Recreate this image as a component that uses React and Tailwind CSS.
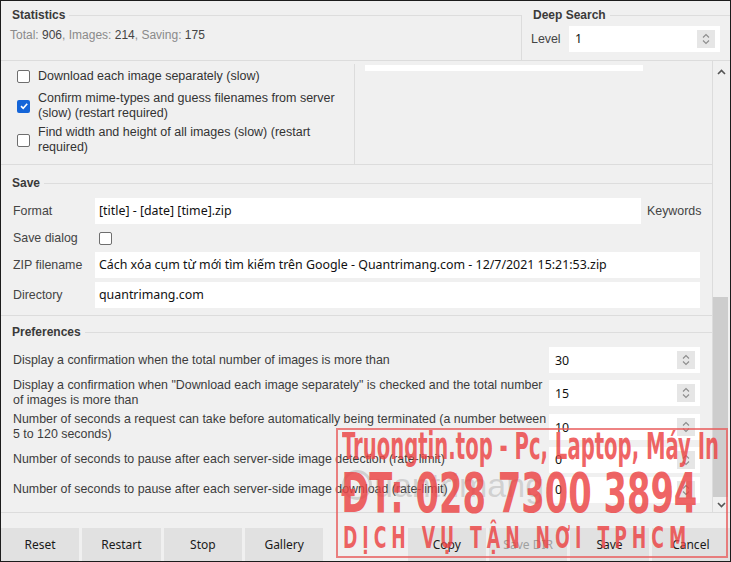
import React from "react";

function Spinner() {
  return (
    <div className="w-[18px] h-[18px] bg-[#e6e6e6] flex items-center justify-center shrink-0">
      <svg width="10" height="14" viewBox="0 0 10 14" fill="none" stroke="#8c8c8c" strokeWidth="1.1">
        <path d="M2 5.5 L5 2.5 L8 5.5" />
        <path d="M2 8.5 L5 11.5 L8 8.5" />
      </svg>
    </div>
  );
}

function NumInput({ value, w = "w-[151px]" }) {
  return (
    <div className={"bg-white h-[26px] flex items-center pl-[6px] pr-[5px] shrink-0 " + w}>
      <span className="flex-1 text-[12.4px] text-[#111] font-['Noto_Sans',sans-serif]">{value}</span>
      <Spinner />
    </div>
  );
}

function Check({ checked }) {
  if (checked) {
    return (
      <div className="w-[13px] h-[13px] rounded-[2px] bg-[#1565d8] flex items-center justify-center shrink-0">
        <svg width="10" height="10" viewBox="0 0 10 10" fill="none" stroke="white" strokeWidth="1.6">
          <path d="M2 5.2 L4.2 7.3 L8.2 2.8" />
        </svg>
      </div>
    );
  }
  return <div className="w-[13px] h-[13px] rounded-[2px] bg-white border border-[#6e6e6e] shrink-0" />;
}

function Legend({ children, className = "" }) {
  return (
    <div className={"flex items-center h-[16px] " + className}>
      <span className="text-[12px] font-bold text-[#3a3a3a] pl-[11px] pr-[4px] whitespace-nowrap">{children}</span>
      <div className="flex-1 h-px bg-[#dddddd]" />
    </div>
  );
}

function TextInput({ value, className = "" }) {
  return (
    <div className={"bg-white h-[26px] flex items-center pl-[4px] text-[12.4px] text-[#111] font-['Noto_Sans',sans-serif] whitespace-nowrap overflow-hidden " + className}>
      {value}
    </div>
  );
}

function Btn({ children, disabled }) {
  return (
    <div className={"h-[33px] bg-[#e1e1e1] flex items-center justify-center text-[12px] font-['Noto_Sans',sans-serif] " + (disabled ? "text-[#a0a0a0]" : "text-[#1a1a1a]")}>
      {children}
    </div>
  );
}

export default function App() {
  return (
    <div className="relative w-[731px] h-[562px] overflow-hidden bg-[#f0f0f0] border border-[#1c1c1c] font-['Liberation_Sans',Arial,sans-serif] text-[#3c3c3c] flex flex-col">
      {/* Top row */}
      <div className="h-[60px] flex border-b border-[#dcdcdc] shrink-0">
        <div className="w-[520px] pt-[6px]">
          <Legend>Statistics</Legend>
          <div className="pl-[9px] mt-[3px] text-[12px] text-[#8a8a8a]">
            Total: <span className="text-[#444]">906</span>, Images: <span className="text-[#444]">214</span>, Saving: <span className="text-[#444]">175</span>
          </div>
        </div>
        <div className="w-px bg-[#dcdcdc] mt-[14px]" />
        <div className="flex-1 pt-[6px]">
          <div className="flex items-center h-[16px]">
            <span className="text-[12px] font-bold text-[#3a3a3a] pl-[11px] pr-[4px]">Deep Search</span>
            <div className="flex-1 h-px bg-[#dddddd]" />
          </div>
          <div className="flex items-center mt-[3px] pl-[9px]">
            <span className="text-[12.4px] text-[#444] w-[38px]">Level</span>
            <NumInput value="1" w="w-[151px]" />
          </div>
        </div>
      </div>

      {/* Scroll region */}
      <div className="h-[452px] flex shrink-0 border-b border-[#dcdcdc]">
        <div className="w-[711px] flex flex-col">
          {/* options */}
          <div className="h-[104px] flex border-b border-[#dcdcdc] shrink-0">
            <div className="w-[354px] border-r border-[#dcdcdc] mt-[3px] text-[12.5px] leading-[15px] text-[#333]">
              <div className="flex items-center pl-[16px] mt-[5px]">
                <Check />
                <span className="ml-[8px] whitespace-nowrap">Download each image separately (slow)</span>
              </div>
              <div className="flex items-center pl-[16px] mt-[7px]">
                <Check checked />
                <span className="ml-[8px] whitespace-nowrap">Confirm mime-types and guess filenames from server<br />(slow) (restart required)</span>
              </div>
              <div className="flex items-center pl-[16px] mt-[4px]">
                <Check />
                <span className="ml-[8px] whitespace-nowrap">Find width and height of all images (slow) (restart<br />required)</span>
              </div>
            </div>
            <div className="flex-1 pl-[10px] pt-[4px]">
              <div className="w-[278px] h-[6px] bg-white" />
            </div>
          </div>

          {/* Save */}
          <div className="h-[151px] border-b border-[#dcdcdc] shrink-0 flex flex-col">
            <Legend className="mt-[10px]">Save</Legend>
            <div className="flex flex-col gap-[4px] mt-[7px] pl-[12px] text-[12.4px] text-[#444]">
              <div className="flex items-center h-[26px]">
                <span className="w-[82px]">Format</span>
                <TextInput value="[title] - [date] [time].zip" className="w-[546px]" />
                <span className="ml-[6px]">Keywords</span>
              </div>
              <div className="flex items-center h-[20px]">
                <span className="w-[86px]">Save dialog</span>
                <div className="w-[13px] h-[13px] rounded-[2px] bg-white border border-[#6e6e6e]" />
              </div>
              <div className="flex items-center h-[26px]">
                <span className="w-[82px]">ZIP filename</span>
                <TextInput value="Cách xóa cụm từ mới tìm kiếm trên Google - Quantrimang.com - 12/7/2021 15:21:53.zip" className="w-[605px]" />
              </div>
              <div className="flex items-center h-[26px]">
                <span className="w-[82px]">Directory</span>
                <TextInput value="quantrimang.com" className="w-[605px]" />
              </div>
            </div>
          </div>

          {/* Preferences */}
          <div className="flex-1 flex flex-col">
            <Legend className="mt-[8px]">Preferences</Legend>
            <div className="flex flex-col mt-[7px] pl-[12px] text-[12.4px] leading-[15px] text-[#3c3c3c]">
              <div className="flex items-center h-[26px]">
                <span className="w-[536px] whitespace-nowrap">Display a confirmation when the total number of images is more than</span>
                <NumInput value="30" />
              </div>
              <div className="flex items-center h-[32px] mt-[4px]">
                <span className="w-[536px] whitespace-nowrap">Display a confirmation when "Download each image separately" is checked and the total number<br />of images is more than</span>
                <NumInput value="15" />
              </div>
              <div className="flex items-center h-[32px] mt-[2px]">
                <span className="w-[536px] whitespace-nowrap">Number of seconds a request can take before automatically being terminated (a number between<br />5 to 120 seconds)</span>
                <NumInput value="10" />
              </div>
              <div className="flex items-center h-[27px] mt-[3px]">
                <span className="w-[536px] whitespace-nowrap">Number of seconds to pause after each server-side image detection (rate-limit)</span>
                <NumInput value="0" />
              </div>
              <div className="flex items-center h-[27px] mt-[3px]">
                <span className="w-[536px] whitespace-nowrap">Number of seconds to pause after each server-side image download (rate-limit)</span>
                <NumInput value="0" />
              </div>
            </div>
          </div>
        </div>

        {/* Scrollbar */}
        <div className="w-[17px] border-l border-[#dcdcdc] flex flex-col items-center">
          <div className="h-[24px] flex items-center justify-center">
            <svg width="9" height="6" viewBox="0 0 9 6" fill="none" stroke="#555" strokeWidth="1.6">
              <path d="M1 5 L4.5 1.5 L8 5" />
            </svg>
          </div>
          <div className="flex-1 w-full flex flex-col">
            <div className="h-[214px]" />
            <div className="h-[200px] w-[15px] bg-[#cdcdcd]" />
          </div>
          <div className="h-[16px] flex items-center justify-center">
            <svg width="9" height="6" viewBox="0 0 9 6" fill="none" stroke="#555" strokeWidth="1.6">
              <path d="M1 1 L4.5 4.5 L8 1" />
            </svg>
          </div>
        </div>
      </div>

      {/* Footer buttons */}
      <div className="flex-1 flex flex-col justify-end">
        <div className="grid grid-cols-9 gap-[3px]">
          <Btn>Reset</Btn>
          <Btn>Restart</Btn>
          <Btn>Stop</Btn>
          <Btn>Gallery</Btn>
          <div />
          <Btn>Copy</Btn>
          <Btn disabled>Save DIR</Btn>
          <Btn>Save</Btn>
          <Btn>Cancel</Btn>
        </div>
      </div>

      {/* Watermark overlay */}
      <div className="absolute left-[335px] top-[427px] w-[392px] h-[130px] border-2 border-[rgba(232,90,90,0.75)] pointer-events-none overflow-hidden">
        <div className="absolute left-[4px] top-[38px] flex items-center text-[rgba(150,150,150,0.35)] font-['Liberation_Sans',sans-serif] text-[34px] leading-none">
          <span className="w-[30px] h-[30px] rounded-full border-[3px] border-[rgba(150,150,150,0.35)] mr-[2px]" />
          <span>uantrimang</span>
        </div>
        <div className="absolute left-[4px] top-[-2px] origin-left scale-x-[0.59] whitespace-nowrap font-['DejaVu_Sans_Condensed','DejaVu_Sans',sans-serif] font-bold text-[37px] leading-none text-[rgba(236,66,66,0.82)]">
          Truongtin.top - Pc, Laptop, Máy In
        </div>
        <div className="absolute left-[3px] top-[35px] origin-left scale-x-[0.67] whitespace-nowrap font-['DejaVu_Sans_Condensed','DejaVu_Sans',sans-serif] font-bold text-[56px] leading-none text-[rgba(236,66,66,0.82)]">
          ĐT: 028 7300 3894
        </div>
        <div className="absolute left-[5px] top-[92px] origin-left scale-x-[0.62] whitespace-nowrap tracking-[8px] font-['DejaVu_Sans_Condensed','DejaVu_Sans',sans-serif] font-bold text-[31px] leading-none text-[rgba(236,66,66,0.82)]">
          DỊCH VỤ TẬN NƠI TPHCM
        </div>
      </div>
    </div>
  );
}
